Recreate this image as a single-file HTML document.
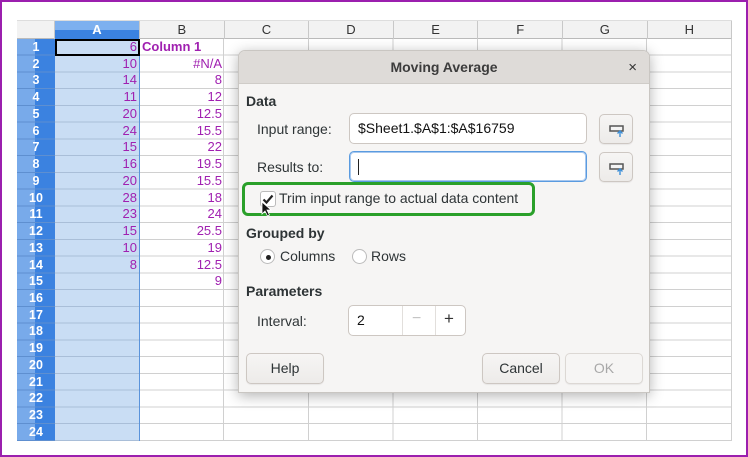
<!DOCTYPE html>
<html><head><meta charset="utf-8"><style>
*{margin:0;padding:0;box-sizing:border-box}
body{width:748px;height:457px;position:relative;background:#fff;font-family:"Liberation Sans",sans-serif;overflow:hidden}
.frame{position:absolute;left:0;top:0;width:748px;height:457px;border:2px solid #9b1fae;z-index:50;pointer-events:none}
.grid{position:absolute;left:55px;top:39px;width:677px;height:402px;
background-image:repeating-linear-gradient(to bottom,transparent 0,transparent 15.74px,#d0d0d0 15.74px,#d0d0d0 16.74px),
repeating-linear-gradient(to right,transparent 0,transparent 83.6px,#d0d0d0 83.6px,#d0d0d0 84.6px);border-right:1px solid #d0d0d0;border-bottom:1px solid #d0d0d0}
.colA{position:absolute;left:55px;top:39px;width:85px;height:402px;background:#c9ddf4;
background-image:repeating-linear-gradient(to bottom,transparent 0,transparent 15.74px,#a9bed8 15.74px,#a9bed8 16.74px);border-right:1px solid #5a93db}
.hdr{position:absolute;top:20px;left:17px;width:715px;height:19px;background:#f2f2f2;border-top:1px solid #ddd;border-bottom:1px solid #bbb}
.ch{position:absolute;top:0;height:18px;line-height:18px;text-align:center;font-size:13px;color:#333;border-right:1px solid #c8c8c8}
.rh{position:absolute;left:17px;top:39px;width:38px;height:402px;
background-image:repeating-linear-gradient(to bottom,transparent 0,transparent 15.74px,#5e8fd0 15.74px,#5e8fd0 16.74px),linear-gradient(to right,#78aaea 0,#78aaea 18px,#3b82e0 18px)}
.rn div{height:16.74px;line-height:16.74px;text-align:center;color:#fff;font-weight:bold;font-size:12.5px}
.cv div{height:16.74px;line-height:16.74px;text-align:right;padding-right:2px;color:#a020b0;font-size:13px}
.dlg{position:absolute;left:238px;top:50px;width:412px;height:343px;background:#f6f5f4;border:1px solid #c9c6c2;border-radius:7px 7px 0 0;box-shadow:0 3px 14px rgba(0,0,0,.3);font-size:14px;color:#2e3436;overflow:hidden}
.tb{height:33px;background:#dedbd8;border-bottom:1px solid #cfccc8;text-align:center;line-height:33px;font-weight:bold;font-size:14px;color:#3c3c3c}
.a{position:absolute}
.b{font-weight:bold}
.entry{position:absolute;background:#fff;border:1px solid #cdc7c2;border-radius:5px}
.btn{position:absolute;background:linear-gradient(#f6f5f4,#edebe9);border:1px solid #cdc7c2;border-radius:5px;text-align:center;box-shadow:0 1px 1px rgba(0,0,0,.06)}
</style></head><body>
<div class="frame"></div>
<div class="grid"></div>
<div class="colA"></div>
<div class="hdr">
<div class="ch" style="left:0;width:38px"></div>
<div class="ch" style="left:38px;width:85px;background:linear-gradient(#7db0ef 0,#7db0ef 9px,#3b82e0 9px);color:#fff;font-weight:bold">A</div>
<div class="ch" style="left:123px;width:84.6px">B</div>
<div class="ch" style="left:207.6px;width:84.6px">C</div>
<div class="ch" style="left:292.2px;width:84.6px">D</div>
<div class="ch" style="left:376.8px;width:84.6px">E</div>
<div class="ch" style="left:461.4px;width:84.6px">F</div>
<div class="ch" style="left:546px;width:84.6px">G</div>
<div class="ch" style="left:630.6px;width:84.4px">H</div>
</div>
<div class="rh"></div>
<div class="a rn" style="left:17px;top:39px;width:38px">
<div>1</div><div>2</div><div>3</div><div>4</div><div>5</div><div>6</div><div>7</div><div>8</div><div>9</div><div>10</div><div>11</div><div>12</div><div>13</div><div>14</div><div>15</div><div>16</div><div>17</div><div>18</div><div>19</div><div>20</div><div>21</div><div>22</div><div>23</div><div>24</div></div>
<div class="a" style="left:55px;top:38.5px;width:85px;height:17.5px;border:2px solid #000"></div>
<div class="a cv" style="left:55px;top:39px;width:84px">
<div>6</div><div>10</div><div>14</div><div>11</div><div>20</div><div>24</div><div>15</div><div>16</div><div>20</div><div>28</div><div>23</div><div>15</div><div>10</div><div>8</div></div>
<div class="a cv" style="left:140px;top:39px;width:84px">
<div style="text-align:left;padding-left:2px;font-weight:bold">Column 1</div><div>#N/A</div><div>8</div><div>12</div><div>12.5</div><div>15.5</div><div>22</div><div>19.5</div><div>15.5</div><div>18</div><div>24</div><div>25.5</div><div>19</div><div>12.5</div><div>9</div></div>

<div class="dlg">
<div class="tb">Moving Average</div>
<div class="a" style="right:12px;top:8px;font-size:15px;color:#333">×</div>
<div class="a b" style="left:7px;top:42px">Data</div>
<div class="a" style="left:18px;top:70px">Input range:</div>
<div class="entry" style="left:110px;top:62px;width:238px;height:31px;line-height:29px;padding-left:8px;color:#111">$Sheet1.$A$1:$A$16759</div>
<div class="btn" style="left:360px;top:63px;width:34px;height:30px"><svg width="34" height="30"><rect x="10" y="11" width="13" height="5" fill="#f4f4f4" stroke="#555" stroke-width="1.5"/><path d="M20 22V16M17.5 18.5L20 16L22.5 18.5" stroke="#3d8fd8" stroke-width="1.4" fill="none"/></svg></div>
<div class="a" style="left:18px;top:108px">Results to:</div>
<div class="entry" style="left:110px;top:100px;width:238px;height:31px;border:1px solid #5a9be0;box-shadow:0 0 0 1px #a8c8ee inset"><div style="position:absolute;left:8px;top:7px;width:1px;height:16px;background:#222"></div></div>
<div class="btn" style="left:360px;top:101px;width:34px;height:30px"><svg width="34" height="30"><rect x="10" y="11" width="13" height="5" fill="#f4f4f4" stroke="#555" stroke-width="1.5"/><path d="M20 22V16M17.5 18.5L20 16L22.5 18.5" stroke="#3d8fd8" stroke-width="1.4" fill="none"/></svg></div>
<div class="a" style="left:3px;top:131px;width:293px;height:34px;border:3px solid #2aa02a;border-radius:6px"></div>
<div class="a" style="left:21px;top:140px;width:16px;height:16px;background:#fff;border:1px solid #bbb;border-radius:3px"><svg width="14" height="14" style="position:absolute;left:0;top:0"><path d="M2.5 7.5L5.5 10.5L11.5 3.5" stroke="#222" stroke-width="2.2" fill="none"/></svg></div>
<svg class="a" style="left:22px;top:150px" width="12" height="16"><path d="M1 1V13L4 10L6.5 15L8.5 14L6 9H10Z" fill="#111" stroke="#fff" stroke-width=".8"/></svg>
<div class="a" style="left:40px;top:139px">Trim input range to actual data content</div>
<div class="a b" style="left:7px;top:174px">Grouped by</div>
<div class="a" style="left:21px;top:198px;width:15px;height:15px;border:1px solid #bbb;border-radius:50%;background:#fff"><div style="position:absolute;left:4.5px;top:4.5px;width:5px;height:5px;border-radius:50%;background:#222"></div></div>
<div class="a" style="left:41px;top:197px">Columns</div>
<div class="a" style="left:113px;top:198px;width:15px;height:15px;border:1px solid #bbb;border-radius:50%;background:#fff"></div>
<div class="a" style="left:132px;top:197px">Rows</div>
<div class="a b" style="left:7px;top:232px">Parameters</div>
<div class="a" style="left:18px;top:262px">Interval:</div>
<div class="entry" style="left:109px;top:254px;width:118px;height:31px">
<div class="a" style="left:8px;top:6px;color:#111">2</div>
<div class="a" style="left:53px;top:0;width:1px;height:29px;background:#e2dfdc"></div>
<div class="a" style="left:86px;top:0;width:1px;height:29px;background:#e2dfdc"></div>
<div class="a" style="left:63px;top:4px;color:#c4c4c4;font-size:16px">−</div>
<div class="a" style="left:95px;top:3px;color:#333;font-size:17px">+</div>
</div>
<div class="btn" style="left:7px;top:302px;width:78px;height:31px;line-height:29px">Help</div>
<div class="btn" style="left:243px;top:302px;width:78px;height:31px;line-height:29px">Cancel</div>
<div class="btn" style="left:326px;top:302px;width:78px;height:31px;line-height:29px;color:#a8a8a8;background:#f6f5f4;border-color:#dcd8d4">OK</div>
</div>
</body></html>
